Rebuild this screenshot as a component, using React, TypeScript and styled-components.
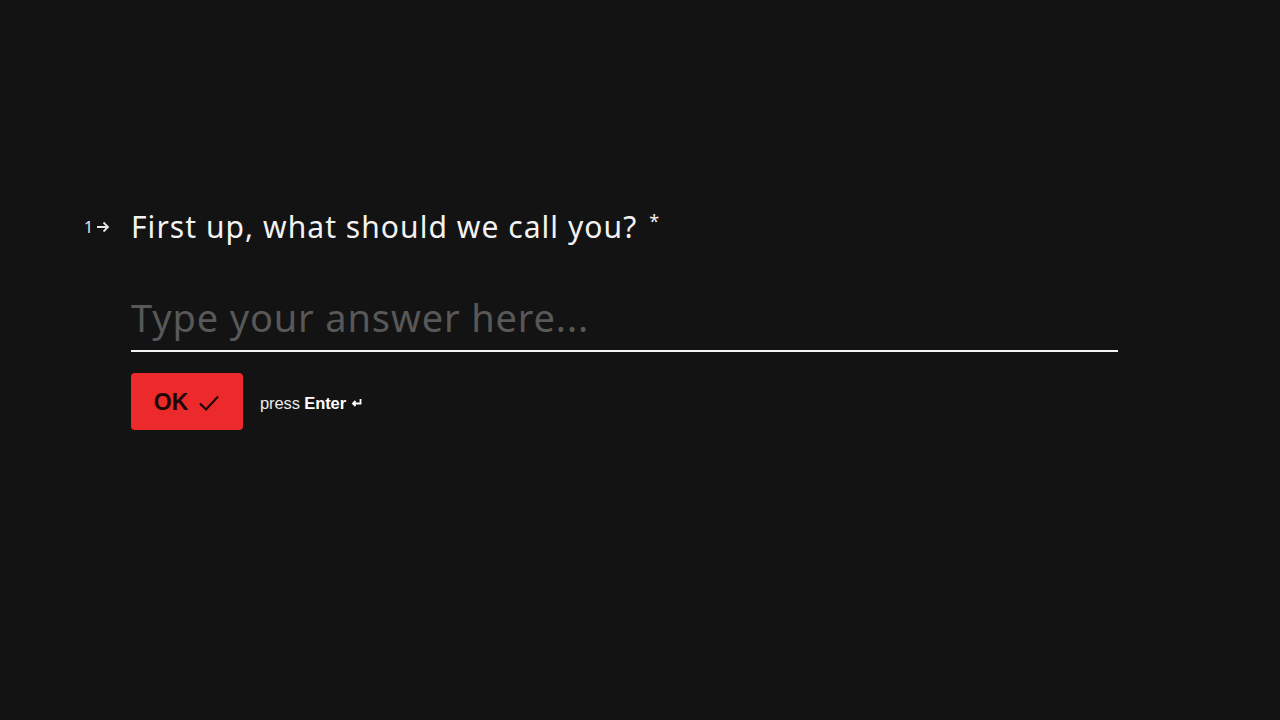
import styled, { createGlobalStyle } from "styled-components";

const GlobalStyle = createGlobalStyle`
  html, body {
    margin: 0;
    padding: 0;
    background: #131313;
  }
  * {
    box-sizing: border-box;
  }
`;

const Page = styled.div`
  min-height: 100vh;
  background: #131313;
  padding: 204px 0 0 84px;
  font-family: "Noto Sans", "Open Sans", sans-serif;
  color: #f2f2f2;
`;

const QuestionRow = styled.div`
  display: flex;
  align-items: center;
  height: 44px;
`;

const Counter = styled.div`
  display: flex;
  align-items: center;
  gap: 3px;
  width: 47px;
  font-size: 16px;
  color: #e6e6e6;
  padding-top: 2px;
`;

const Question = styled.h1`
  margin: 0;
  font-size: 30px;
  font-weight: 400;
  letter-spacing: 1.05px;
  color: #f2f2f2;
  padding-top: 1px;
`;

const Required = styled.span`
  font-size: 18px;
  margin-left: 12px;
  vertical-align: 10px;
`;

const Body = styled.div`
  margin-left: 47px;
  width: 987px;
`;

const AnswerInput = styled.input`
  display: block;
  width: 100%;
  margin-top: 44px;
  padding: 0 0 8px 0;
  background: transparent;
  border: none;
  border-bottom: 2px solid #f4f4f4;
  outline: none;
  font-family: "Noto Sans", "Open Sans", sans-serif;
  font-size: 38px;
  letter-spacing: 0.85px;
  line-height: 50px;
  color: #f2f2f2;

  &::placeholder {
    color: #585858;
  }
`;

const Actions = styled.div`
  display: flex;
  align-items: center;
  gap: 17px;
  margin-top: 21px;
`;

const OkButton = styled.button`
  display: flex;
  align-items: center;
  justify-content: center;
  gap: 10px;
  width: 112px;
  height: 57px;
  border: none;
  border-radius: 4px;
  background: #ec2a2b;
  color: #1c0606;
  font-family: "Liberation Sans", Arial, sans-serif;
  font-weight: 700;
  font-size: 23px;
  padding: 2px 0 0 0;
  cursor: pointer;
`;

const Hint = styled.span`
  display: flex;
  align-items: center;
  gap: 5px;
  font-family: "Liberation Sans", Arial, sans-serif;
  font-size: 16.5px;
  color: #ececec;
  letter-spacing: -0.1px;
  padding-top: 3px;

  b {
    font-weight: 700;
    color: #ffffff;
  }
`;

const ArrowIcon = () => (
  <svg width="14" height="12" viewBox="0 0 14 12" fill="none">
    <path d="M1 6h11M7.5 1.5L12 6l-4.5 4.5" stroke="#e6e6e6" strokeWidth="1.8" />
  </svg>
);

const CheckIcon = () => (
  <svg width="22" height="18" viewBox="0 0 22 18" fill="none">
    <path d="M2 9.5l6 6L20 2.5" stroke="#1c0606" strokeWidth="2.2" />
  </svg>
);

const EnterIcon = () => (
  <svg width="11" height="10" viewBox="0 0 11 10" fill="none">
    <path d="M9.5 1v4.5H2M4.5 3L2 5.5 4.5 8" stroke="#ffffff" strokeWidth="1.8" />
  </svg>
);

function App() {
  return (
    <>
      <GlobalStyle />
      <Page>
        <QuestionRow>
          <Counter>
            <span>1</span>
            <ArrowIcon />
          </Counter>
          <Question>
            First up, what should we call you?<Required>*</Required>
          </Question>
        </QuestionRow>
        <Body>
          <AnswerInput placeholder="Type your answer here..." />
          <Actions>
            <OkButton>
              OK
              <CheckIcon />
            </OkButton>
            <Hint>
              <span>
                press <b>Enter</b>
              </span>
              <EnterIcon />
            </Hint>
          </Actions>
        </Body>
      </Page>
    </>
  );
}

export default App;
